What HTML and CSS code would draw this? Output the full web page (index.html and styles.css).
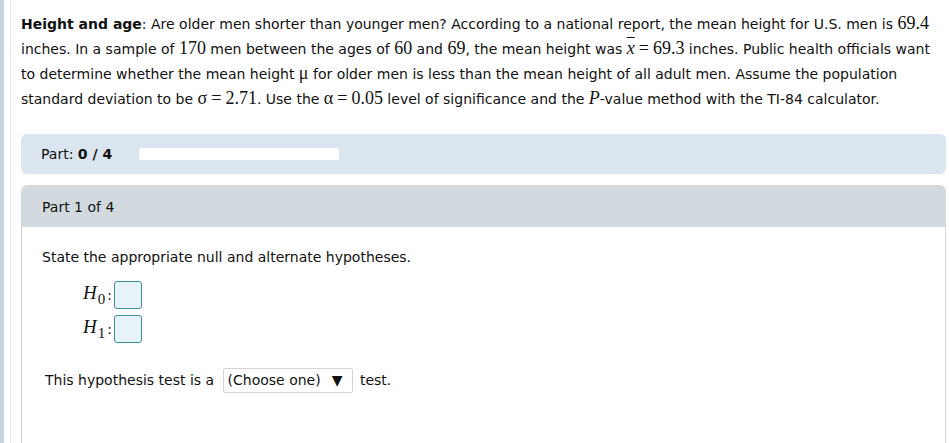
FILE: index.html
```html
<!DOCTYPE html>
<html lang="en">
<head>
  <meta charset="UTF-8" />
  <title>Height and age</title>
  <link rel="stylesheet" href="styles.css">
</head>
<body>
  <div class="rail"></div>
  <div class="main">
    <p class="problem">
      <b>Height and age</b>: Are older men shorter than younger men? According to a national report, the mean height for U.S. men is <span class="m">69.4</span>
      inches. In a sample of <span class="m">170</span> men between the ages of <span class="m">60</span> and <span class="m">69</span>, the mean height was <span class="m"><i class="xbar">x</i><span class="eq">=</span>69.3</span> inches. Public health officials want
      to determine whether the mean height <span class="m">&mu;</span> for older men is less than the mean height of all adult men. Assume the population
      standard deviation to be <span class="m">&sigma;<span class="eq">=</span>2.71</span>. Use the <span class="m">&alpha;<span class="eq">=</span>0.05</span> level of significance and the <span class="m"><i>P</i></span>-value method with the TI-84 calculator.
    </p>

    <div class="progress">
      <span>Part: <b>0 / 4</b></span>
      <div class="bar"></div>
    </div>

    <div class="part">
      <div class="part-head">Part 1 of 4</div>
      <div class="part-body">
        <p class="prompt">State the appropriate null and alternate hypotheses.</p>
        <div class="hyp">
          <div class="hyp-row"><span class="h"><i>H</i><sub>0</sub></span><span class="colon">:</span><span class="ans"></span></div>
          <div class="hyp-row"><span class="h"><i>H</i><sub>1</sub></span><span class="colon">:</span><span class="ans"></span></div>
        </div>
        <p class="test">This hypothesis test is a <span class="choose">(Choose one)<span class="arrow">&#9660;</span></span> test.</p>
      </div>
    </div>
  </div>
</body>
</html>
```

FILE: styles.css
```css
html, body {
  height: 100%;
}
body {
  margin: 0;
  display: flex;
  font-family: "DejaVu Sans", Verdana, sans-serif;
  font-size: 14px;
  color: #111;
  background: #fff;
}
.rail {
  width: 4px;
  background: #c8d3db;
}
.main {
  flex: 1;
  margin-left: 6px;
  border-left: 1px solid #e6e6e6;
  padding: 12px 3px 0 10px;
}
.problem {
  margin: 0;
  line-height: 25px;
}
.m {
  font-family: "Liberation Serif", "Times New Roman", serif;
  font-size: 18px;
  line-height: 1;
}
.eq {
  padding: 0 4px;
}
.xbar {
  text-decoration: overline;
}
.progress {
  margin-top: 22px;
  height: 40px;
  background: #dbe5ef;
  border-radius: 6px;
  display: flex;
  align-items: center;
  gap: 27px;
  padding-left: 20px;
}
.bar {
  width: 200px;
  height: 12px;
  background: #fff;
  border-radius: 3px;
}
.part {
  margin-top: 11px;
  border: 1px solid #d0d6da;
  border-bottom: none;
  border-radius: 6px 6px 0 0;
}
.part-head {
  background: #d3dadf;
  height: 41px;
  line-height: 42px;
  padding-left: 20px;
  border-radius: 5px 5px 0 0;
}
.part-body {
  padding: 22px 20px 60px;
}
.prompt {
  margin: 0;
}
.hyp {
  margin: 16px 0 0 41px;
  display: flex;
  flex-direction: column;
  gap: 6px;
}
.hyp-row {
  display: flex;
  align-items: center;
}
.h {
  font-family: "Liberation Serif", "Times New Roman", serif;
  font-size: 19px;
}
.h sub {
  font-size: 15px;
  font-style: normal;
  margin-left: 1px;
  vertical-align: -5px;
}
.colon {
  margin: 0 2px 0 2px;
}
.ans {
  width: 26px;
  height: 26px;
  border: 1px solid #3d8f9c;
  border-radius: 3px;
  background: #e6f3f9;
}
.test {
  margin: 25px 0 0 3px;
}
.choose {
  display: inline-block;
  margin: 0 2px 0 4px;
  padding: 3px 10px 4px 4px;
  border: 1px solid #d4d4d4;
  border-radius: 2px;
}
.arrow {
  margin-left: 11px;
  font-size: 14px;
}
```
